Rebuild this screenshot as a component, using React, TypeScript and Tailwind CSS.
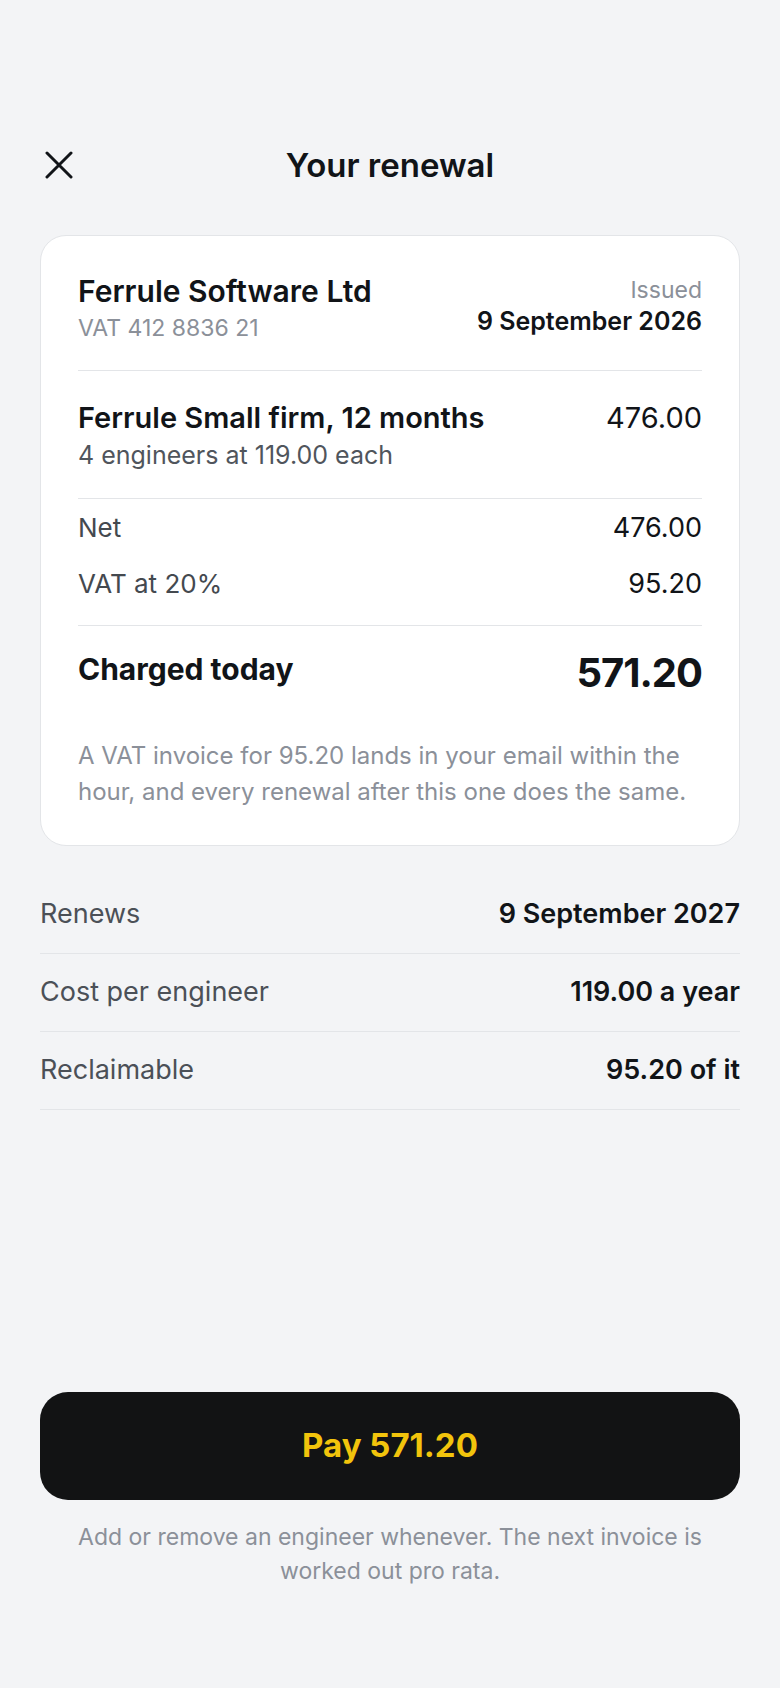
import React from 'react';

const rows = [
  { label: 'Renews', value: '9 September 2027' },
  { label: 'Cost per engineer', value: '119.00 a year' },
  { label: 'Reclaimable', value: '95.20 of it' },
];

function CloseIcon() {
  return (
    <svg width="28" height="28" viewBox="0 0 28 28" fill="none" stroke="#111418" strokeWidth="3" strokeLinecap="round">
      <path d="M2 2 L26 26 M26 2 L2 26" />
    </svg>
  );
}

export default function App() {
  return (
    <div
      className="min-h-screen bg-[#f3f4f6] px-10 flex flex-col text-[#111418]"
      style={{ fontFamily: 'Inter, "Noto Sans", sans-serif' }}
    >
      {/* header */}
      <div className="relative mt-[136px] h-[58px] flex items-center justify-center">
        <button className="absolute left-[5px] top-[15px]">
          <CloseIcon />
        </button>
        <h1 className="text-[33px] font-semibold leading-none">Your renewal</h1>
      </div>

      {/* receipt card */}
      <div className="mt-[41px] bg-white border border-[#e3e5e8] rounded-[26px] px-[37px] pt-[38px] pb-[35px]">
        <div className="flex justify-between items-start pb-[26px] border-b border-[#e3e5e8]">
          <div>
            <div className="text-[30px] font-semibold leading-[34px]">Ferrule Software Ltd</div>
            <div className="mt-[4px] text-[23px] leading-[32px] text-[#8b9099]">VAT 412 8836 21</div>
          </div>
          <div className="text-right mt-[2px]">
            <div className="text-[23px] leading-[28px] text-[#8b9099]">Issued</div>
            <div className="mt-[3px] text-[25px] leading-[28px] font-semibold">9 September 2026</div>
          </div>
        </div>

        <div className="pt-[30px] pb-[27px] border-b border-[#e3e5e8]">
          <div className="flex justify-between items-start">
            <div className="text-[29px] font-semibold leading-[34px]">Ferrule Small firm, 12 months</div>
            <div className="text-[29px] leading-[34px]">476.00</div>
          </div>
          <div className="mt-[4px] text-[25px] leading-[32px] text-[#50555c]">4 engineers at 119.00 each</div>
        </div>

        <div className="pt-[12px] pb-[24px] border-b border-[#e3e5e8] flex flex-col gap-[22px]">
          <div className="flex justify-between items-center leading-[34px]">
            <span className="text-[26px] text-[#44494f]">Net</span>
            <span className="text-[27px]">476.00</span>
          </div>
          <div className="flex justify-between items-center leading-[34px]">
            <span className="text-[26px] text-[#44494f]">VAT at 20%</span>
            <span className="text-[27px]">95.20</span>
          </div>
        </div>

        <div className="pt-[27px] flex justify-between items-start">
          <span className="mt-[1px] text-[30px] font-bold leading-none">Charged today</span>
          <span className="text-[40px] font-bold leading-none tracking-tight">571.20</span>
        </div>

        <p className="mt-[45px] text-[24px] leading-[36px] text-[#8b9099]">
          A VAT invoice for 95.20 lands in your email within the hour, and every renewal after this one does the same.
        </p>
      </div>

      {/* summary rows */}
      <div className="mt-[30px]">
        {rows.map((r) => (
          <div key={r.label} className="h-[78px] flex items-center justify-between border-b border-[#e3e5e8] text-[27px]">
            <span className="text-[#4b5057]">{r.label}</span>
            <span className="font-semibold">{r.value}</span>
          </div>
        ))}
      </div>

      {/* pay */}
      <div className="mt-auto pb-[100px]">
        <button className="w-full h-[108px] rounded-[28px] bg-[#121314] flex items-center justify-center text-[33px] font-bold text-[#f2c40c]">
          Pay 571.20
        </button>
        <p className="mt-[20px] px-[30px] text-center text-[23px] leading-[34px] text-[#8b9099]">
          Add or remove an engineer whenever. The next invoice is worked out pro rata.
        </p>
      </div>
    </div>
  );
}
